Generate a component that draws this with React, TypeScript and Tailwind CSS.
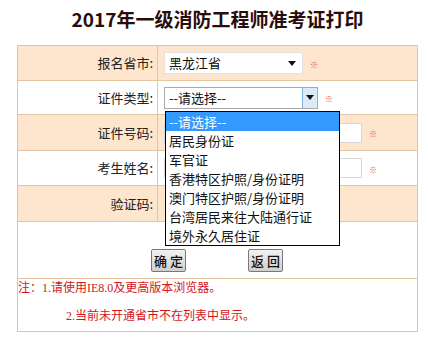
import React from 'react';

const cjk = { fontFamily: '"Noto Sans CJK SC", "Noto Sans", sans-serif' };
const noteFont = { fontFamily: '"Liberation Serif", "Noto Sans CJK SC", serif' };

const options = [
  '--请选择--',
  '居民身份证',
  '军官证',
  '香港特区护照/身份证明',
  '澳门特区护照/身份证明',
  '台湾居民来往大陆通行证',
  '境外永久居住证',
];

function Star({ className = '' }: { className?: string }) {
  return (
    <span className={`mt-[3px] text-[8px] leading-none text-[#e8474f] ${className}`}>※</span>
  );
}

function Caret() {
  return (
    <svg width="8" height="5" viewBox="0 0 8 5">
      <path d="M0 0h8L4 5z" fill="#111" />
    </svg>
  );
}

function Row({
  label,
  peach,
  h,
  children,
}: {
  label: string;
  peach?: boolean;
  h: string;
  children: React.ReactNode;
}) {
  return (
    <div className={`flex border-b border-[#e6c4a2] ${h} ${peach ? 'bg-[#fde6cd]' : 'bg-white'}`}>
      <div className="flex w-[140px] shrink-0 items-center justify-end border-r border-[#e6c4a2] pr-[4px] text-[13px] text-[#222]">
        {label}
      </div>
      <div className="relative flex flex-1 items-center pl-[6px]">{children}</div>
    </div>
  );
}

export default function App() {
  return (
    <div className="h-[339px] w-[428px] overflow-hidden bg-white" style={cjk}>
      <div className="ml-[17px] w-[401px]">
        <h1 className="flex h-[45px] items-center justify-center pb-[7px] text-[19px] font-bold text-[#2a0c0c]">
          2017年一级消防工程师准考证打印
        </h1>

        <div className="border-x border-t border-[#e6c4a2]">
          <Row label="报名省市:" peach h="h-[35px]">
            <div className="flex h-[22px] w-[139px] items-center justify-between border border-[#e2e2e2] bg-white pl-[4px] pr-[6px] text-[13px] text-[#111]">
              <span>黑龙江省</span>
              <Caret />
            </div>
            <Star className="ml-[7px]" />
          </Row>

          <Row label="证件类型:" h="h-[34px]">
            <div className="relative z-10 flex h-[22px] w-[154px] items-center border border-[#a9a9a9] bg-white text-[13px] text-[#111]">
              <span className="flex-1 pl-[4px]">--请选择--</span>
              <span className="flex h-full w-[15px] items-center justify-center border-l border-[#7fb0e0] bg-[#dceaf8]">
                <Caret />
              </span>
              <div className="absolute left-[0px] top-[23px] w-[175px] border border-black bg-white">
                {options.map((o, i) => (
                  <div
                    key={o}
                    className={`h-[19px] pl-[3px] text-[13px] leading-[19px] ${
                      i === 0 ? 'bg-[#3399ff] text-white' : 'text-[#111]'
                    }`}
                  >
                    {o}
                  </div>
                ))}
              </div>
            </div>
            <Star className="ml-[7px]" />
          </Row>

          <Row label="证件号码:" peach h="h-[36px]">
            <div className="h-[20px] w-[198px] border border-[#d6d6d6] bg-white" />
            <Star className="ml-[7px]" />
          </Row>

          <Row label="考生姓名:" h="h-[35px]">
            <div className="h-[20px] w-[198px] border border-[#d6d6d6] bg-white" />
            <Star className="ml-[7px]" />
          </Row>

          <Row label="验证码:" peach h="h-[36px]">
            <span />
          </Row>

          <div className="flex h-[57px] items-end justify-center gap-[62px] border-b border-[#e6c4a2] pb-[6px] pr-[1px]">
            <button className="h-[23px] w-[35px] rounded-[2px] border border-[#7a7a7a] bg-gradient-to-b from-[#f2f2f2] to-[#cfcfcf] text-[13px] font-medium text-[#111]">
              确 定
            </button>
            <button className="h-[23px] w-[35px] rounded-[2px] border border-[#7a7a7a] bg-gradient-to-b from-[#f2f2f2] to-[#cfcfcf] text-[13px] font-medium text-[#111]">
              返 回
            </button>
          </div>

          <div className="h-[53px] border-b border-[#e6c4a2] text-[12px] text-[#d4141c]" style={noteFont}>
            <div className="h-[16px] pt-[1px] leading-[16px]">注：1.请使用IE8.0及更高版本浏览器。</div>
            <div className="mt-[13px] pl-[48px] leading-[16px]">2.当前未开通省市不在列表中显示。</div>
          </div>
        </div>
      </div>
    </div>
  );
}
